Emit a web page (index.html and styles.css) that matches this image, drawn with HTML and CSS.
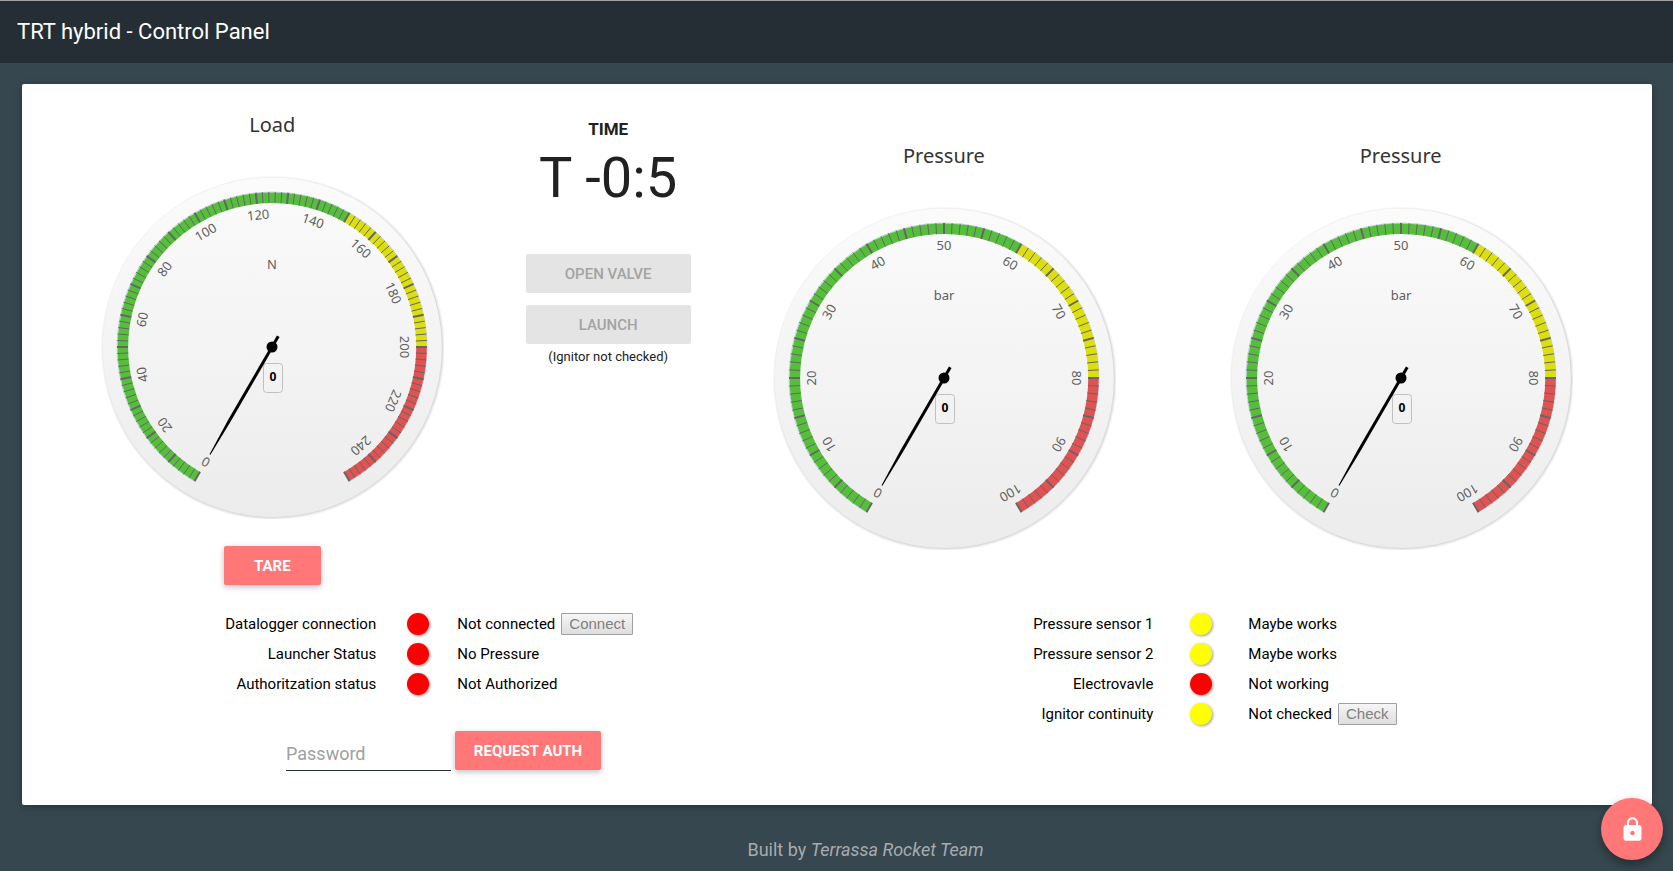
FILE: index.html
```html
<!DOCTYPE html>
<html lang="en">
<head>
<meta charset="utf-8">
<title>TRT hybrid - Control Panel</title>
<link rel="stylesheet" href="styles.css">
</head>
<body>
<header class="topbar">
  <h1 class="topbar-title">TRT hybrid - Control Panel</h1>
</header>

<main class="card">
  <div class="instruments">
    <section class="gauge-column">
      <h2 class="gauge-title">Load</h2>
      <svg class="gauge" viewBox="-172 -172 344 344" data-max="250" data-unit="N" data-label-step="20" data-major-step="10" data-minor-step="2" data-yellow="150" data-red="200"></svg>
      <button class="btn btn-tare" type="button">TARE</button>
    </section>

    <section class="launch-column">
      <h2 class="time-label">TIME</h2>
      <div class="time-value">T -0:5</div>
      <div class="launch-buttons">
        <button class="btn btn-wide" type="button" disabled>OPEN VALVE</button>
        <button class="btn btn-wide" type="button" disabled>LAUNCH</button>
      </div>
      <p class="launch-note">(Ignitor not checked)</p>
    </section>

    <section class="gauge-column gauge-column-low">
      <h2 class="gauge-title">Pressure</h2>
      <svg class="gauge" viewBox="-172 -172 344 344" data-max="100" data-unit="bar" data-label-step="10" data-major-step="5" data-minor-step="1" data-yellow="60" data-red="80"></svg>
    </section>

    <section class="gauge-column gauge-column-low">
      <h2 class="gauge-title">Pressure</h2>
      <svg class="gauge" viewBox="-172 -172 344 344" data-max="100" data-unit="bar" data-label-step="10" data-major-step="5" data-minor-step="1" data-yellow="60" data-red="80"></svg>
    </section>
  </div>

  <div class="statuses">
    <section>
      <table class="status-table status-table-links">
        <colgroup><col class="col-name"><col class="col-dot"><col></colgroup>
        <tr><th scope="row">Datalogger connection</th><td class="dot-cell"><span class="dot dot-red"></span></td><td><div class="status-value">Not connected <button class="mini" type="button" disabled>Connect</button></div></td></tr>
        <tr><th scope="row">Launcher Status</th><td class="dot-cell"><span class="dot dot-red"></span></td><td>No Pressure</td></tr>
        <tr><th scope="row">Authoritzation status</th><td class="dot-cell"><span class="dot dot-red"></span></td><td>Not Authorized</td></tr>
      </table>
      <form class="auth">
        <input class="auth-input" type="password" placeholder="Password" aria-label="Password">
        <button class="btn btn-auth" type="button">REQUEST AUTH</button>
      </form>
    </section>

    <section>
      <table class="status-table status-table-sensors">
        <colgroup><col class="col-name"><col class="col-dot"><col></colgroup>
        <tr><th scope="row">Pressure sensor 1</th><td class="dot-cell"><span class="dot dot-yellow"></span></td><td>Maybe works</td></tr>
        <tr><th scope="row">Pressure sensor 2</th><td class="dot-cell"><span class="dot dot-yellow"></span></td><td>Maybe works</td></tr>
        <tr><th scope="row">Electrovavle</th><td class="dot-cell"><span class="dot dot-red"></span></td><td>Not working</td></tr>
        <tr><th scope="row">Ignitor continuity</th><td class="dot-cell"><span class="dot dot-yellow"></span></td><td><div class="status-value">Not checked <button class="mini" type="button" disabled>Check</button></div></td></tr>
      </table>
    </section>
  </div>
</main>

<footer class="footer">Built by <em>Terrassa Rocket Team</em></footer>

<button class="fab" type="button" aria-label="Lock">
  <svg class="fab-icon" viewBox="0 0 24 24"><path d="M18 8h-1V6c0-2.760-2.240-5-5-5S7 3.240 7 6v2H6c-1.100 0-2 .9-2 2v10c0 1.100.9 2 2 2h12c1.100 0 2-.9 2-2V10c0-1.100-.9-2-2-2zm-6 9c-1.100 0-2-.9-2-2s.9-2 2-2 2 .9 2 2-.9 2-2 2zm3.100-9H8.900V6c0-1.710 1.390-3.100 3.100-3.100s3.100 1.390 3.100 3.100v2z"/></svg>
</button>

<svg class="defs" aria-hidden="true">
  <defs>
    <linearGradient id="face" x1="0" y1="0" x2="0" y2="1">
      <stop offset="0" stop-color="#fbfbfb"/>
      <stop offset="1" stop-color="#ececec"/>
    </linearGradient>
  </defs>
</svg>
<script src="gauges.js"></script>
</body>
</html>
```
FILE: styles.css
```css
* { box-sizing: border-box; }

body {
  margin: 0;
  min-height: 100vh;
  background: #37474f;
  color: #000;
  font-family: Roboto, "Liberation Sans", sans-serif;
  font-size: 15px;
}

h1, h2, p { margin: 0; font-weight: 400; }

.topbar {
  display: flex;
  align-items: center;
  height: 63px;
  padding: 0 17px;
  background: #242e34;
  border-top: 1px solid #a3a4a5;
}
.topbar-title { color: #fff; font-size: 22px; line-height: 28px; }

.card {
  margin: 21px 21px 0 22px;
  padding: 24px 24px 34px;
  background: #fff;
  border-radius: 2px;
  box-shadow: 0 2px 5px rgba(0, 0, 0, .16), 0 2px 10px rgba(0, 0, 0, .12);
}

.instruments {
  display: grid;
  grid-template-columns: 17fr 8fr 17fr 17fr;
  margin: 0 -1px 0 -2px;
}
.gauge-column {
  display: flex;
  flex-direction: column;
  align-items: center;
  padding-top: 3px;
}
.gauge-column-low { padding-top: 34px; }
.gauge-title {
  color: #333;
  font-family: "Noto Sans", "Open Sans", sans-serif;
  font-size: 20px;
  line-height: 28px;
}
.gauge {
  display: block;
  width: 100%;
  max-width: 344px;
  margin-top: 36px;
}
.gauge text {
  fill: #606060;
  font-family: "Noto Sans", "Open Sans", sans-serif;
  font-size: 13px;
  text-anchor: middle;
}
.gauge .reading {
  fill: #000;
  font-size: 12px;
  font-weight: 700;
}

.launch-column {
  display: flex;
  flex-direction: column;
  align-items: center;
  padding-top: 11px;
  color: #212121;
}
.time-label { font-size: 17px; font-weight: 700; line-height: 20px; }
.time-value { margin-top: 4px; font-size: 56px; line-height: 70px; }
.launch-buttons {
  display: grid;
  gap: 12px;
  margin-top: 41px;
}
.launch-note { margin-top: 4px; font-size: 13px; line-height: 18px; }

.btn {
  height: 39px;
  padding: 1px 0 0;
  border: 0;
  border-radius: 2px;
  background: #ff7777;
  color: #fff;
  font: 700 15px/38px Roboto, sans-serif;
  box-shadow: 0 2px 5px rgba(0, 0, 0, .16), 0 2px 8px rgba(0, 0, 0, .1);
}
.btn:disabled {
  background: #e4e4e4;
  color: #a3a3a3;
  font-weight: 500;
  box-shadow: none;
}
.btn-wide { width: 165px; }
.btn-tare { width: 97px; margin-top: 27px; }
.btn-auth { width: 146px; }

.statuses {
  display: grid;
  grid-template-columns: 1fr 1fr;
  margin-top: 24px;
}
.status-table {
  width: 100%;
  table-layout: fixed;
  border-collapse: collapse;
}
.status-table-links .col-name { width: 42%; }
.status-table-links .col-dot { width: 10%; }
.status-table-sensors .col-name { width: 40%; }
.status-table-sensors .col-dot { width: 12%; }
.status-table th,
.status-table td {
  height: 30px;
  padding: 0;
  font-size: 15px;
  font-weight: 400;
  line-height: 20px;
  text-align: left;
}
.status-table th { text-align: right; }
.status-table-links th { padding-right: 2px; }
.status-table .dot-cell { text-align: center; }
.status-table td:last-child { position: static; }
.dot {
  display: inline-block;
  width: 22px;
  height: 22px;
  border-radius: 50%;
  vertical-align: middle;
  box-shadow: 1px 1px 3px rgba(0, 0, 0, .4);
}
.dot-red { background: #f00; }
.dot-yellow { background: #ff0; }
.status-value { display: flex; align-items: center; gap: 6px; }
.mini {
  height: 22px;
  padding: 0 7px;
  border: 1px solid #a0a0a0;
  border-radius: 1px;
  background: linear-gradient(#f6f6f6, #dedede);
  color: #808080;
  font: 15px/20px "Liberation Sans", Arial, sans-serif;
}

.auth {
  display: flex;
  gap: 4px;
  margin-top: 32px;
  padding-left: 240px;
}
.auth-input {
  width: 165px;
  height: 40px;
  padding: 6px 0 0;
  border: 0;
  border-bottom: 1px solid #263238;
  background: transparent;
  font: 18px Roboto, sans-serif;
}
.auth-input::placeholder { color: #a0a0a0; opacity: 1; }

.footer {
  padding: 33px 0 10px 58px;
  color: #a7abad;
  font-size: 18px;
  line-height: 24px;
  text-align: center;
}

.fab {
  position: fixed;
  right: 10px;
  bottom: 11px;
  display: grid;
  place-items: center;
  width: 62px;
  height: 62px;
  padding: 0;
  border: 0;
  border-radius: 50%;
  background: #ff7777;
  box-shadow: 0 5px 11px rgba(0, 0, 0, .2), 0 4px 10px rgba(0, 0, 0, .2);
}
.fab-icon { width: 27px; height: 27px; fill: #fff; }

.defs { position: absolute; width: 0; height: 0; }
```
FILE: gauges.js
```js
const NS = 'http://www.w3.org/2000/svg';
const START = -150;
const SWEEP = 300;

function add(parent, name, attrs, text) {
  const el = document.createElementNS(NS, name);
  for (const key in attrs) el.setAttribute(key, attrs[key]);
  if (text !== undefined) el.textContent = text;
  parent.appendChild(el);
}

function point(radius, angle) {
  const rad = angle * Math.PI / 180;
  return (radius * Math.sin(rad)).toFixed(2) + ' ' + (-radius * Math.cos(rad)).toFixed(2);
}

function arc(radius, from, to) {
  return `M${point(radius, from)}A${radius} ${radius} 0 ${to - from > 180 ? 1 : 0} 1 ${point(radius, to)}`;
}

document.querySelectorAll('.gauge').forEach(svg => {
  const d = svg.dataset;
  const max = +d.max;
  const angle = v => START + SWEEP * v / max;

  // Face: soft shadow rings below a light disc
  [[5, .03], [3, .05], [1, .07]].forEach(([width, opacity]) =>
    add(svg, 'circle', { cx: 1, cy: 1, r: 169.5, fill: 'none', stroke: '#000', 'stroke-opacity': opacity, 'stroke-width': width }));
  add(svg, 'circle', { r: 169.5, fill: 'url(#face)' });

  // Coloured bands
  add(svg, 'path', { d: arc(155, START, START + SWEEP), fill: 'none', stroke: '#c0d0e0', 'stroke-width': 1 });
  [[0, +d.yellow, '#55bf3b'], [+d.yellow, +d.red, '#dddf0d'], [+d.red, max, '#df5353']].forEach(([from, to, color]) =>
    add(svg, 'path', { d: arc(149.5, angle(from), angle(to)), fill: 'none', stroke: color, 'stroke-width': 10.5 }));

  for (let v = 0; v <= max; v += +d.minorStep) {
    add(svg, 'path', {
      d: `M${point(144, angle(v))}L${point(155, angle(v))}`,
      stroke: '#666',
      'stroke-width': v % d.majorStep ? 1 : 2
    });
  }

  for (let v = 0; v <= max; v += +d.labelStep) {
    add(svg, 'text', { transform: `rotate(${angle(v)})`, y: -128 }, v);
  }
  add(svg, 'text', { y: -78 }, d.unit);

  // Reading, needle and pivot
  add(svg, 'rect', { x: -8.5, y: 16.5, width: 19, height: 29, rx: 3, fill: 'none', stroke: '#c0c0c0' });
  add(svg, 'text', { class: 'reading', x: 1, y: 34 }, 0);
  add(svg, 'path', { d: 'M-1.500 12.500L-1.500 -85L-.5 -124L.5 -124L1.500 -85L1.500 12.500Z', transform: `rotate(${START})` });
  add(svg, 'circle', { r: 5.5 });
});
```
